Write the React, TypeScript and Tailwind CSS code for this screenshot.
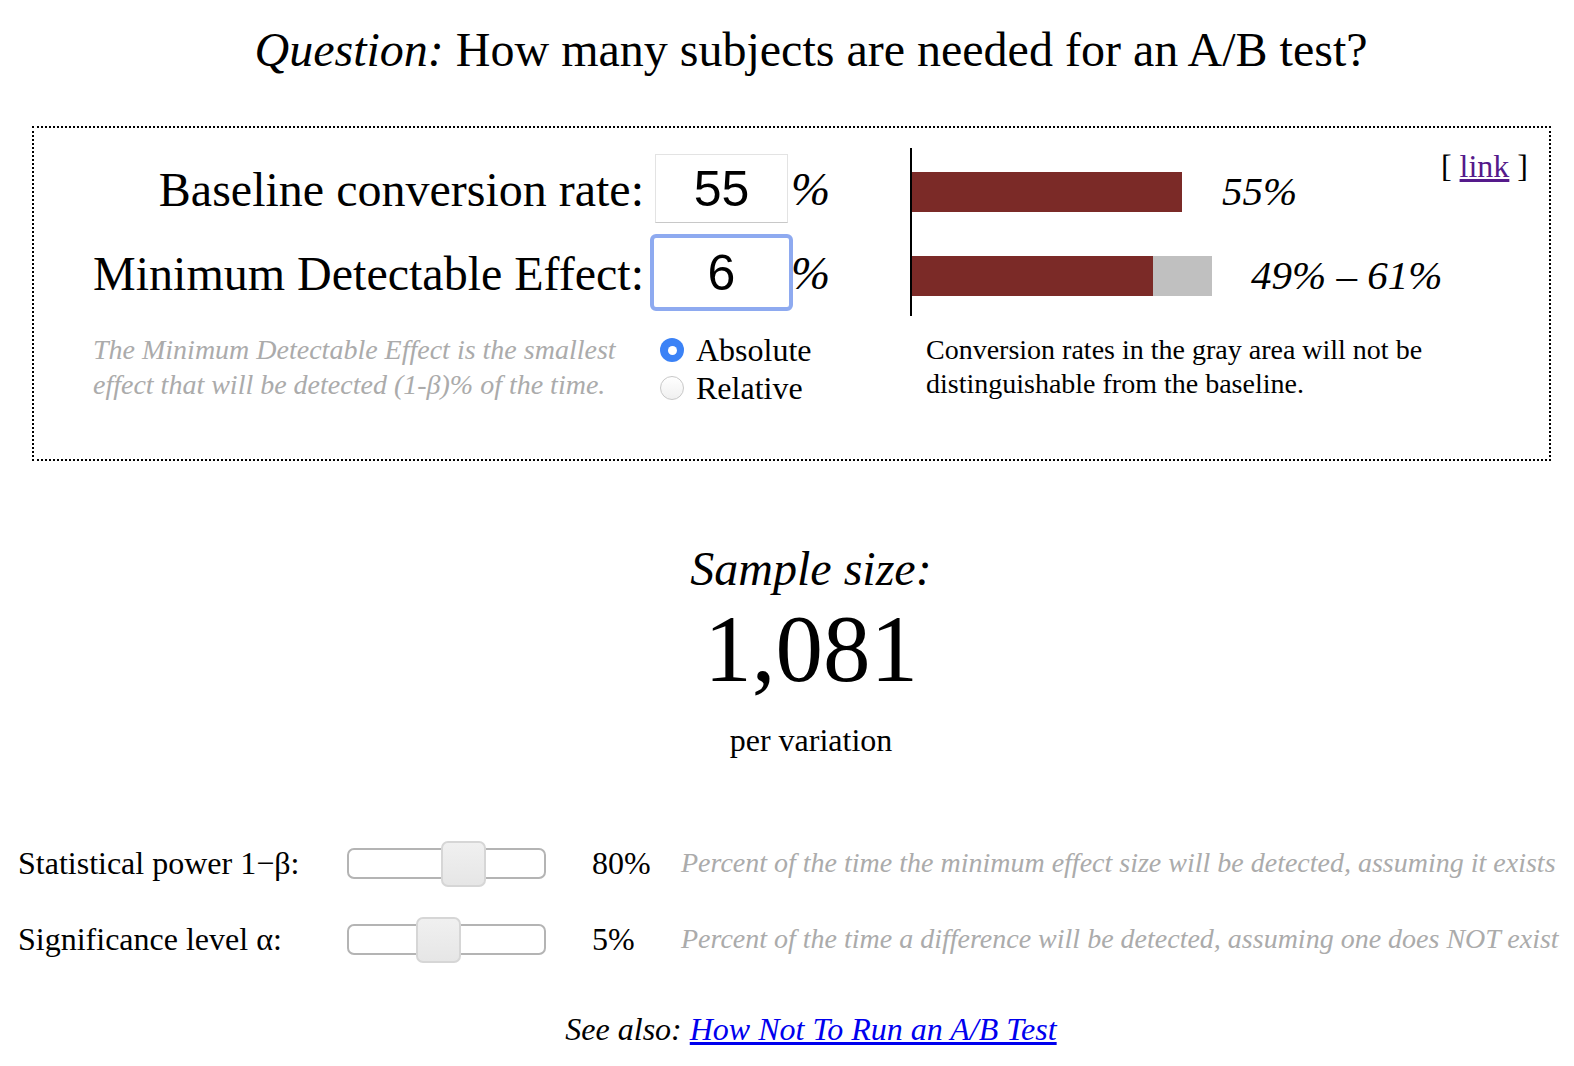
import { useState } from "react"

const serif = "font-['Liberation_Serif',_'Times_New_Roman',_serif]"

const Slider = ({ pos }: { pos: number }) => (
  <div className="relative w-[199px] h-[31px] rounded-[7px] border-2 border-[#b4b4b4] bg-white">
    <div
      className="absolute top-[-9px] w-[45px] h-[46px] rounded-[7px] border-2 border-[#d6d6d6] bg-gradient-to-b from-[#f0f0f0] to-[#e6e6e6]"
      style={{ left: pos }}
    />
  </div>
)

const App = () => {
  const [mode, setMode] = useState("absolute")

  return (
    <div className={`${serif} w-[1574px] min-h-[1066px] bg-white text-black`}>
      {/* Title */}
      <h1 className="pl-[48px] pt-[22px] text-center text-[48px] leading-[56px]">
        <i>Question:</i> How many subjects are needed for an A/B test?
      </h1>

      {/* Input box */}
      <div className="ml-[32px] mt-[48px] w-[1519px] h-[335px] border-2 border-dotted border-black flex">
        <div className="w-[840px] pt-[18px]">
          <div className="grid grid-cols-[610px_152px_60px] items-center">
            <div className="text-right text-[48px] leading-[80px] pt-[4px]">Baseline conversion rate:</div>
            <div className="pl-[11px] flex">
              <div className="w-[133px] h-[69px] pt-[3px] border border-[#e3e3e3] border-b-[#c8c8c8] font-['Liberation_Sans',_Arial,_sans-serif] text-[50px] flex items-center justify-center">
                55
              </div>
            </div>
            <div className="italic text-[47px] -ml-[5px] pt-[3px]">%</div>

            <div className="text-right text-[48px] leading-[80px] pt-[4px]">Minimum Detectable Effect:</div>
            <div className="pl-[6px] flex">
              <div className="w-[143px] h-[77px] pt-[3px] rounded-[6px] border-[4px] border-[#8eaaf0] bg-white font-['Liberation_Sans',_Arial,_sans-serif] text-[50px] flex items-center justify-center">
                6
              </div>
            </div>
            <div className="italic text-[47px] -ml-[5px] pt-[3px]">%</div>
          </div>

          <div className="flex mt-[18px]">
            <p className="ml-[59px] w-[540px] italic text-[#ababab] text-[28px] leading-[35px]">
              The Minimum Detectable Effect is the smallest effect that will be detected (1-β)% of the time.
            </p>
            <div className="ml-[27px] flex flex-col text-[32px] leading-[38px] -mt-[1px]">
              {[
                ["absolute", "Absolute"],
                ["relative", "Relative"],
              ].map(([key, label]) => (
                <label key={key} className="flex items-center gap-[12px] cursor-pointer">
                  <span
                    onClick={() => setMode(key)}
                    className={
                      mode === key
                        ? "w-[24px] h-[24px] rounded-full bg-[#3b82f6] flex items-center justify-center"
                        : "w-[24px] h-[24px] rounded-full border border-[#c8c8c8] bg-gradient-to-b from-white to-[#f0f0f0]"
                    }
                  >
                    {mode === key && <span className="w-[9px] h-[9px] rounded-full bg-white" />}
                  </span>
                  {label}
                </label>
              ))}
            </div>
          </div>
        </div>

        {/* Chart */}
        <div className="relative flex-1 pl-[36px] pt-[20px]">
          <a className="absolute right-[21px] top-[14px] text-[32px]">
            [ <span className="text-[#551a8b] underline">link</span> ]
          </a>
          <div className="border-l-2 border-black w-[560px] h-[168px] pt-[24px] flex flex-col gap-[44px]">
            <div className="flex items-center h-[40px]">
              <div className="w-[270px] h-[40px] bg-[#7b2a27]" />
              <span className="ml-[40px] italic text-[41px]">55%</span>
            </div>
            <div className="flex items-center h-[40px]">
              <div className="w-[241px] h-[40px] bg-[#7b2a27]" />
              <div className="w-[59px] h-[40px] bg-[#c0c0c0]" />
              <span className="ml-[39px] italic text-[41px]">49% – 61%</span>
            </div>
          </div>
          <p className="ml-[16px] mt-[17px] w-[540px] text-[28px] leading-[34px]">
            Conversion rates in the gray area will not be distinguishable from the baseline.
          </p>
        </div>
      </div>

      {/* Result */}
      <div className="pl-[48px] mt-[80px] text-center">
        <div className="italic text-[48px] leading-[56px]">Sample size:</div>
        <div className="text-[95px] leading-[96px] mt-[4px]">1,081</div>
        <div className="text-[32px] leading-[40px] mt-[23px]">per variation</div>
      </div>

      {/* Sliders */}
      <div className="mt-[87px] flex flex-col gap-[44px]">
        {[
          ["Statistical power 1−β:", 92, "80%", "Percent of the time the minimum effect size will be detected, assuming it exists"],
          ["Significance level α:", 67, "5%", "Percent of the time a difference will be detected, assuming one does NOT exist"],
        ].map(([label, pos, value, desc]) => (
          <div key={label as string} className="flex items-center h-[32px]">
            <div className="w-[347px] pl-[18px] text-[32px]">{label}</div>
            <Slider pos={pos as number} />
            <div className="ml-[46px] w-[89px] text-[32px]">{value}</div>
            <div className="italic text-[#ababab] text-[28px] whitespace-nowrap">{desc}</div>
          </div>
        ))}
      </div>

      {/* See also */}
      <div className="pl-[48px] mt-[50px] text-center italic text-[32px]">
        See also: <a className="text-[#0000ee] underline">How Not To Run an A/B Test</a>
      </div>
    </div>
  )
}

export default App
